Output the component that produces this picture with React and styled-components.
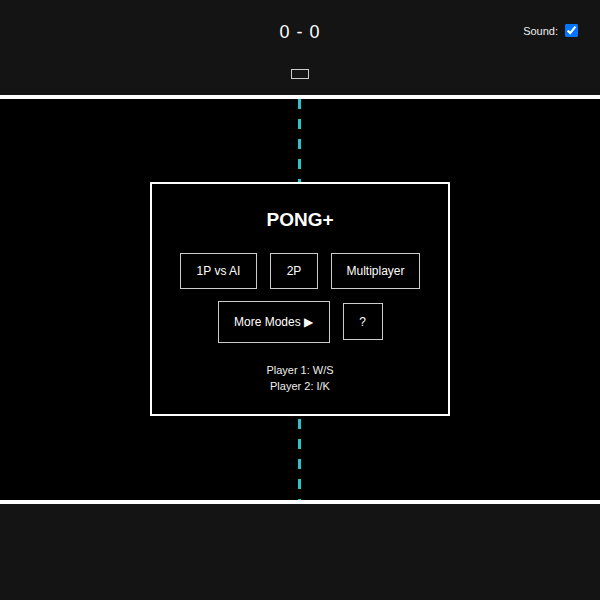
import React from "react";
import styled, { createGlobalStyle } from "styled-components";

const GlobalStyle = createGlobalStyle`
  html, body {
    margin: 0;
    padding: 0;
    background: #141414;
    color: #fff;
    font-family: "Liberation Sans", Arial, sans-serif;
  }
`;

const Page = styled.div`
  width: 600px;
  height: 600px;
  display: flex;
  flex-direction: column;
  background: #141414;
`;

const Header = styled.div`
  position: relative;
  height: 95px;
  display: flex;
  flex-direction: column;
  align-items: center;
`;

const Score = styled.div`
  margin-top: 20px;
  font-family: "Liberation Sans", Arial, sans-serif;
  font-size: 18px;
  line-height: 24px;
  letter-spacing: 1px;
  color: #fff;
`;

const Indicator = styled.div`
  margin-top: 25px;
  width: 16px;
  height: 8px;
  border: 1px solid #ccc;
`;

const SoundToggle = styled.label`
  position: absolute;
  top: 24px;
  right: 22px;
  display: flex;
  align-items: center;
  gap: 7px;
  font-size: 11px;
  color: #eee;

  input {
    margin: 0;
    width: 13px;
    height: 13px;
  }
`;

const Arena = styled.div`
  position: relative;
  height: 401px;
  background: #000;
  border-top: 4px solid #fff;
  border-bottom: 4px solid #fff;
  display: flex;
  align-items: center;
  justify-content: center;
`;

const CenterLine = styled.div`
  position: absolute;
  top: 0;
  bottom: 0;
  left: 298px;
  width: 3px;
  background: repeating-linear-gradient(
    to bottom,
    #2cc4c4 0,
    #2cc4c4 10px,
    transparent 10px,
    transparent 20px
  );
`;

const Menu = styled.div`
  position: relative;
  width: 296px;
  height: 230px;
  margin-top: -2px;
  background: #000;
  border: 2px solid #fff;
  display: flex;
  flex-direction: column;
  align-items: center;
`;

const Title = styled.h1`
  margin: 24px 0 0;
  font-size: 19px;
  line-height: 24px;
  font-weight: bold;
`;

const Row = styled.div`
  display: flex;
  align-items: center;
  gap: 13px;
  margin-top: ${(p) => p.$top}px;
`;

const Button = styled.button`
  box-sizing: border-box;
  height: ${(p) => p.$h}px;
  width: ${(p) => p.$w}px;
  background: #000;
  color: #fff;
  border: 1px solid #ccc;
  font-family: "Liberation Sans", Arial, sans-serif;
  font-size: 12px;
  padding: 0;
  cursor: pointer;
`;

const Controls = styled.div`
  margin-top: 19px;
  font-size: 11px;
  line-height: 16px;
  text-align: center;
  color: #eee;
`;

export default function App() {
  return (
    <>
      <GlobalStyle />
      <Page>
        <Header>
          <Score>0 - 0</Score>
          <Indicator />
          <SoundToggle>
            Sound:
            <input type="checkbox" defaultChecked />
          </SoundToggle>
        </Header>
        <Arena>
          <CenterLine />
          <Menu>
            <Title>PONG+</Title>
            <Row $top={21}>
              <Button $w={77} $h={36}>1P vs AI</Button>
              <Button $w={48} $h={36}>2P</Button>
              <Button $w={89} $h={36}>Multiplayer</Button>
            </Row>
            <Row $top={12}>
              <Button $w={112} $h={42}>More Modes ▶</Button>
              <Button $w={40} $h={37}>?</Button>
            </Row>
            <Controls>
              Player 1: W/S
              <br />
              Player 2: I/K
            </Controls>
          </Menu>
        </Arena>
      </Page>
    </>
  );
}
